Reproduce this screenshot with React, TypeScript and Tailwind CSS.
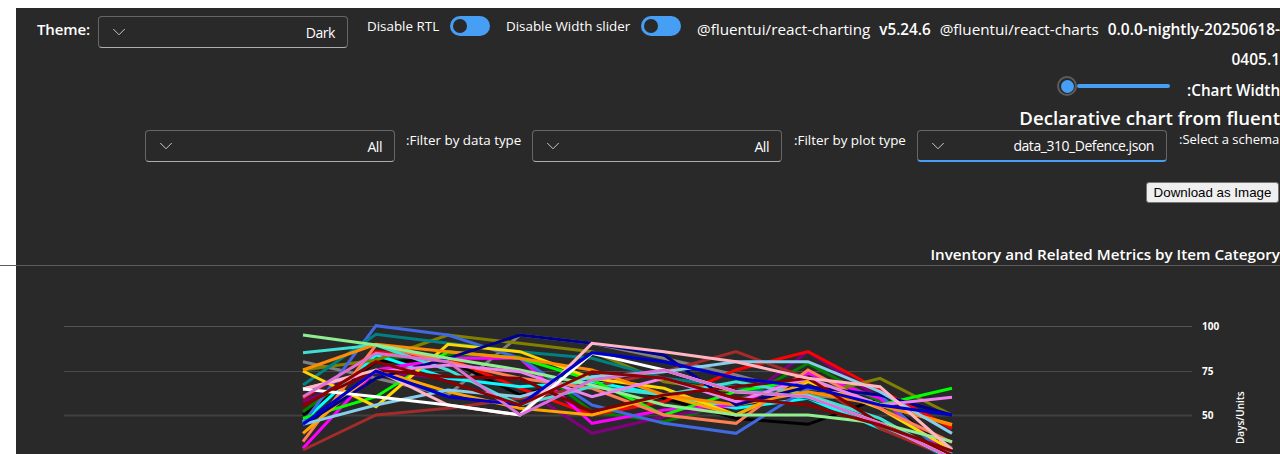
import { ChevronDown } from 'lucide-react';

const X = [303, 376, 448, 520, 592, 664, 736, 808, 880, 952];

// y values are read at 3x, measured down from y=315
const series: { color: string; ys: number[] }[] = [
  { color: '#808080', ys: [140, 190, 240, 60, 85, 130, 180, 240, 260, 400] },
  { color: '#000000', ys: [300, 140, 135, 240, 190, 250, 310, 328, 250, 410] },
  { color: '#008000', ys: [290, 130, 120, 125, 290, 320, 260, 145, 260, 430] },
  { color: '#800080', ys: [260, 170, 190, 215, 355, 305, 270, 110, 250, 420] },
  { color: '#ff0000', ys: [250, 110, 130, 220, 300, 260, 165, 110, 225, 340] },
  { color: '#00ffff', ys: [320, 120, 190, 215, 200, 240, 280, 250, 340, 417] },
  { color: '#ff00ff', ys: [400, 165, 130, 130, 325, 285, 270, 175, 250, 430] },
  { color: '#a52a2a', ys: [405, 300, 280, 250, 215, 170, 110, 190, 340, 430] },
  { color: '#808000', ys: [165, 135, 60, 85, 110, 200, 230, 245, 190, 300] },
  { color: '#4169e1', ys: [325, 32, 60, 130, 270, 325, 355, 220, 240, 440] },
  { color: '#008080', ys: [210, 58, 85, 110, 130, 190, 215, 250, 310, 440] },
  { color: '#00ff00', ys: [310, 245, 110, 130, 195, 300, 230, 190, 270, 220] },
  { color: '#ffd700', ys: [168, 275, 88, 110, 190, 220, 300, 200, 280, 405] },
  { color: '#ff7f50', ys: [380, 90, 140, 190, 220, 300, 325, 165, 280, 382] },
  { color: '#40e0d0', ys: [113, 90, 165, 270, 215, 240, 200, 240, 310, 430] },
  { color: '#ffa500', ys: [355, 165, 230, 280, 300, 240, 300, 195, 270, 328] },
  { color: '#ff8c00', ys: [165, 88, 110, 130, 165, 240, 270, 230, 270, 330] },
  { color: '#00008b', ys: [330, 190, 130, 60, 85, 120, 270, 215, 240, 300] },
  { color: '#87ceeb', ys: [328, 270, 225, 245, 185, 170, 140, 140, 230, 355] },
  { color: '#90ee90', ys: [60, 90, 130, 165, 210, 270, 300, 300, 325, 380] },
  { color: '#ee82ee', ys: [222, 170, 150, 170, 245, 190, 260, 190, 270, 247] },
  { color: '#800000', ys: [270, 165, 185, 190, 290, 240, 215, 190, 325, 420] },
  { color: '#ffb6c1', ys: [222, 165, 270, 300, 85, 110, 140, 190, 215, 405] },
  { color: '#ffffff', ys: [222, 245, 270, 300, 115, 165, 230, 245, 325, 430] },
  { color: '#0000cd', ys: [328, 168, 245, 270, 113, 140, 190, 215, 270, 300] },
  { color: '#da70d6', ys: [245, 115, 140, 300, 195, 165, 230, 245, 325, 430] },
  { color: '#8b0000', ys: [275, 140, 200, 270, 170, 190, 250, 270, 330, 408] },
];

function Dropdown({ value, active }: { value: string; active?: boolean }) {
  return (
    <div
      className={`flex h-8 w-[250px] shrink-0 items-center justify-between rounded border border-[#666666] pl-[9px] pr-3 text-[14px] ${
        active ? 'border-b-2 border-b-[#479ef5]' : 'border-b-[#adadad]'
      }`}
    >
      <ChevronDown size={22} strokeWidth={1} className="text-[#d6d6d6]" />
      <span className="whitespace-nowrap tracking-[-0.45px]">{value}</span>
    </div>
  );
}

function Switch() {
  return (
    <div className="flex h-5 w-10 shrink-0 items-center rounded-full bg-[#479ef5] pl-[3px]">
      <div className="h-[14px] w-[14px] rounded-full bg-[#292929]" />
    </div>
  );
}

export default function App() {
  return (
    <div className="h-[454px] overflow-hidden bg-white pl-4 pt-2 font-['Open_Sans',sans-serif]">
      <div className="h-full bg-[#292929] text-white">
        <div className="flex h-[66px] items-start pt-2 pl-[21px]">
          <span className="mt-[2px] w-[61px] whitespace-nowrap text-[15px] font-semibold tracking-[-0.1px]">Theme:</span>
          <Dropdown value="Dark" />
          <span className="ml-[19px] w-[83px] whitespace-nowrap text-[13.4px]">Disable RTL</span>
          <Switch />
          <span className="ml-4 w-[135px] whitespace-nowrap text-[13.4px]">Disable Width slider</span>
          <Switch />
          <div className="-mt-px ml-4 flex-1 text-right text-[15.25px] leading-[29px]">
            <div className="flex justify-between whitespace-nowrap">
              <span>@fluentui/react-charting</span>
              <span className="font-semibold">v5.24.6</span>
              <span>@fluentui/react-charts</span>
              <span className="text-[15.5px] font-semibold">0.0.0-nightly-20250618-</span>
            </div>
            <div className="mt-px text-[15.5px] font-semibold">0405.1</div>
          </div>
        </div>

        <div className="flex h-[31px] items-start justify-end">
          <div className="mt-[2px] flex items-center">
            <div className="flex h-5 w-5 items-center justify-center rounded-full border-2 border-[#5c5c5c]">
              <div className="h-[13px] w-[13px] rounded-full bg-[#479ef5]" />
            </div>
            <div className="h-1 w-[93px] rounded-full bg-[#479ef5]" />
          </div>
          <span className="mt-[5px] ml-[17px] w-[93px] whitespace-nowrap text-[15.3px] font-semibold">:Chart Width</span>
        </div>

        <div className="flex h-[25px] items-center justify-end whitespace-nowrap text-[18.6px] font-semibold">
          Declarative chart from fluent
        </div>

        <div className="flex items-start justify-end">
          <Dropdown value="All" />
          <span className="ml-[11px] w-[126px] whitespace-nowrap text-[13.4px]">:Filter by data type</span>
          <Dropdown value="All" />
          <span className="ml-3 w-[123px] whitespace-nowrap text-[13.4px]">:Filter by plot type</span>
          <Dropdown value="data_310_Defence.json" active />
          <span className="ml-3 w-[101px] whitespace-nowrap text-[13px]">:Select a schema</span>
        </div>

        <div className="mt-5 flex justify-end pr-px">
          <button className="h-[21px] w-[133px] rounded-[3px] border border-[#767676] bg-[#efefef] font-['Liberation_Sans',sans-serif] text-[13.33px] text-black">
            Download as Image
          </button>
        </div>

        <div className="mt-[41px] flex h-[21px] items-center justify-end whitespace-nowrap text-[15.2px] font-semibold">
          Inventory and Related Metrics by Item Category
        </div>

        <div className="-ml-4 h-px bg-[#5c5c5c]" />

        <svg viewBox="16 266 1264 188" className="block h-[188px] w-[1264px]">
          <line x1="64" x2="1192" y1="326.5" y2="326.5" stroke="#555555" />
          <line x1="64" x2="1192" y1="371.5" y2="371.5" stroke="#4a4a4a" />
          <line x1="64" x2="1192" y1="415.5" y2="415.5" stroke="#404040" strokeWidth="2" />
          {series.map((s) => (
            <polyline
              key={s.color}
              points={s.ys.map((y, i) => `${X[i]},${315 + y / 3}`).join(' ')}
              fill="none"
              stroke={s.color}
              strokeWidth="3"
            />
          ))}
          <g fill="#ffffff" fontSize="10" fontWeight="700">
            <text x="1202" y="330">100</text>
            <text x="1202" y="375">75</text>
            <text x="1202" y="419">50</text>
            <text transform="translate(1244 444) rotate(-90)" fontWeight="600">Days/Units</text>
          </g>
        </svg>
      </div>
    </div>
  );
}
